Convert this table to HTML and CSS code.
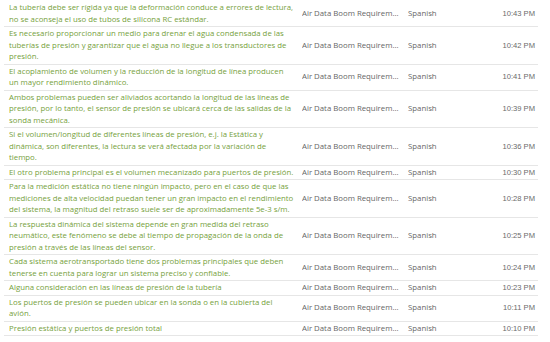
FILE: index.html
```html
<!DOCTYPE html>
<html lang="es">
<head>
<meta charset="utf-8">
<link rel="stylesheet" href="styles.css">
</head>
<body>
<table class="grid">
  <colgroup>
    <col class="c-text"><col class="c-doc"><col class="c-lang"><col class="c-time">
  </colgroup>
  <tbody>
    <tr><td class="seg">La tubería debe ser rígida ya que la deformación conduce a errores de lectura, no se aconseja el uso de tubos de silicona RC estándar.</td><td class="doc">Air Data Boom Requirements</td><td class="lang">Spanish</td><td class="time">10:43 PM</td></tr>
    <tr><td class="seg">Es necesario proporcionar un medio para drenar el agua condensada de las tuberías de presión y garantizar que el agua no llegue a los transductores de presión.</td><td class="doc">Air Data Boom Requirements</td><td class="lang">Spanish</td><td class="time">10:42 PM</td></tr>
    <tr><td class="seg">El acoplamiento de volumen y la reducción de la longitud de línea producen un mayor rendimiento dinámico.</td><td class="doc">Air Data Boom Requirements</td><td class="lang">Spanish</td><td class="time">10:41 PM</td></tr>
    <tr><td class="seg">Ambos problemas pueden ser aliviados acortando la longitud de las líneas de presión, por lo tanto, el sensor de presión se ubicará cerca de las salidas de la sonda mecánica.</td><td class="doc">Air Data Boom Requirements</td><td class="lang">Spanish</td><td class="time">10:39 PM</td></tr>
    <tr><td class="seg">Si el volumen/longitud de diferentes líneas de presión, e.j. la Estática y dinámica, son diferentes, la lectura se verá afectada por la variación de tiempo.</td><td class="doc">Air Data Boom Requirements</td><td class="lang">Spanish</td><td class="time">10:36 PM</td></tr>
    <tr><td class="seg">El otro problema principal es el volumen mecanizado para puertos de presión.</td><td class="doc">Air Data Boom Requirements</td><td class="lang">Spanish</td><td class="time">10:30 PM</td></tr>
    <tr><td class="seg">Para la medición estática no tiene ningún impacto, pero en el caso de que las mediciones de alta velocidad puedan tener un gran impacto en el rendimiento del sistema, la magnitud del retraso suele ser de aproximadamente 5e-3 s/m.</td><td class="doc">Air Data Boom Requirements</td><td class="lang">Spanish</td><td class="time">10:28 PM</td></tr>
    <tr><td class="seg">La respuesta dinámica del sistema depende en gran medida del retraso neumático, este fenómeno se debe al tiempo de propagación de la onda de presión a través de las líneas del sensor.</td><td class="doc">Air Data Boom Requirements</td><td class="lang">Spanish</td><td class="time">10:25 PM</td></tr>
    <tr><td class="seg">Cada sistema aerotransportado tiene dos problemas principales que deben tenerse en cuenta para lograr un sistema preciso y confiable.</td><td class="doc">Air Data Boom Requirements</td><td class="lang">Spanish</td><td class="time">10:24 PM</td></tr>
    <tr><td class="seg">Alguna consideración en las líneas de presión de la tubería</td><td class="doc">Air Data Boom Requirements</td><td class="lang">Spanish</td><td class="time">10:23 PM</td></tr>
    <tr><td class="seg">Los puertos de presión se pueden ubicar en la sonda o en la cubierta del avión.</td><td class="doc">Air Data Boom Requirements</td><td class="lang">Spanish</td><td class="time">10:11 PM</td></tr>
    <tr><td class="seg">Presión estática y puertos de presión total</td><td class="doc">Air Data Boom Requirements</td><td class="lang">Spanish</td><td class="time">10:10 PM</td></tr>
  </tbody>
</table>
</body>
</html>
```
FILE: styles.css
```css
html, body {
  margin: 0;
  padding: 0;
  background: #ffffff;
}
body {
  padding: 1px 0 0 4px;
  font-family: "Open Sans", "DejaVu Sans", sans-serif;
  font-size: 7.8px;
  line-height: 11.5px;
  color: #666666;
}
.grid {
  width: 534px;
  border-collapse: collapse;
  table-layout: fixed;
}
.c-text { width: 298px; }
.c-doc { width: 106px; }
.c-lang { width: 68px; }
.c-time { width: 62px; }
.grid td {
  border-bottom: 1px solid #e6e6e6;
  padding: 1px 0;
  vertical-align: middle;
}
.seg {
  color: #76a13c;
  padding-left: 5px !important;
  padding-right: 7.5px !important;
}
.doc {
  white-space: nowrap;
  overflow: hidden;
  text-overflow: ellipsis;
  padding-right: 8px !important;
}
.lang {
  white-space: nowrap;
}
.time {
  text-align: right;
  white-space: nowrap;
  padding-right: 3px !important;
  font-family: "Liberation Sans", Arial, sans-serif;
  font-size: 7.6px;
  color: #6a6a6a;
}
```
